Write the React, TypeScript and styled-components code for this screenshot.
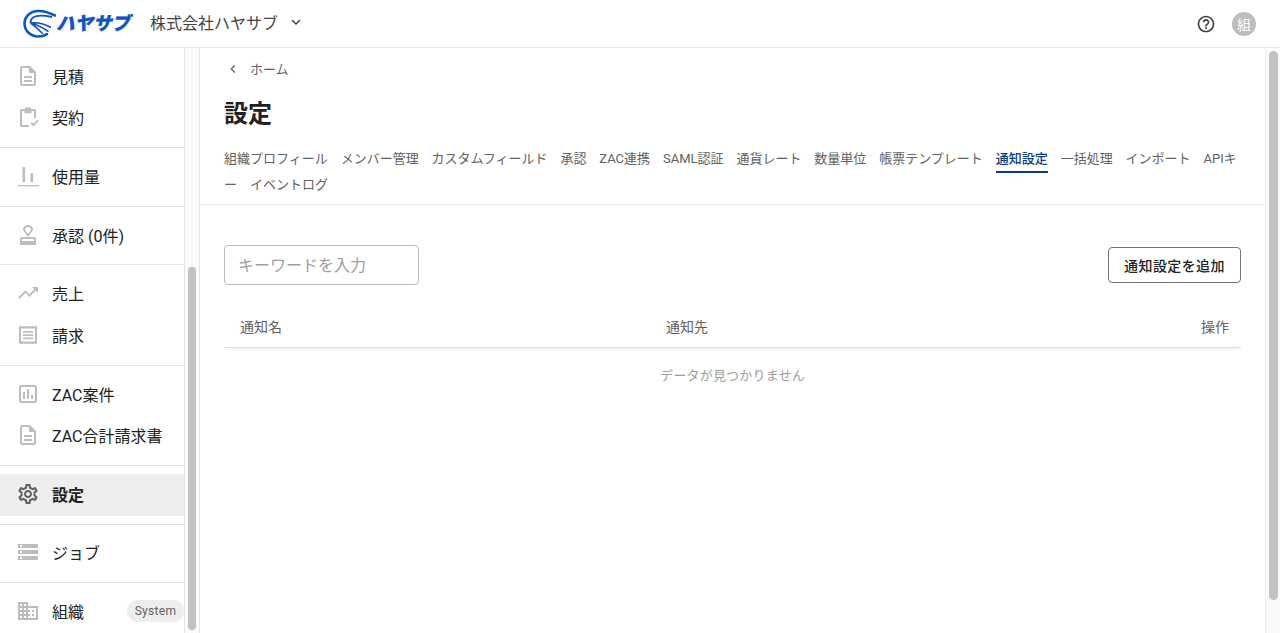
import React from "react";
import styled, { createGlobalStyle } from "styled-components";

const Global = createGlobalStyle`
  html, body { margin: 0; padding: 0; height: 100%; overflow: hidden; background: #fff; }
  body { font-family: Roboto, "Noto Sans CJK JP", sans-serif; color: #212121; }
  #root { height: 100%; }
  * { box-sizing: border-box; }
`;

const Page = styled.div`
  height: 633px;
  display: flex;
  flex-direction: column;
`;
const Header = styled.header`
  height: 48px;
  flex: none;
  display: flex;
  align-items: center;
  padding: 0 24px 0 23px;
  border-bottom: 1px solid #e6e6e6;
`;
const Logo = styled.div`
  display: flex;
  align-items: center;
  width: 127px;
`;
const LogoText = styled.span`
  font-size: 18.5px;
  font-weight: 900;
  font-style: italic;
  color: #0b55c4;
  line-height: 24px;
  -webkit-text-stroke: 0.3px #0b55c4;
  margin-top: 1px;
`;
const Company = styled.div`
  display: flex;
  align-items: center;
  font-size: 16px;
  color: #424242;
  gap: 9px;
  padding-bottom: 3px;
`;
const HeaderEnd = styled.div`
  margin-left: auto;
  display: flex;
  align-items: center;
  gap: 16px;
`;
const Avatar = styled.div`
  width: 24px;
  height: 24px;
  border-radius: 50%;
  background: #bdbdbd;
  color: #fff;
  font-size: 14px;
  display: flex;
  align-items: center;
  justify-content: center;
`;
const Body = styled.div`
  flex: 1;
  min-height: 0;
  display: flex;
`;
const Sidebar = styled.nav`
  width: 185px;
  flex: none;
  border-right: 1px solid #e6e6e6;
  overflow: hidden;
`;
const Group = styled.div`
  padding: 7.9px 0 8px;
  border-bottom: 1px solid #e3e3e3;
  &:not(:first-child) { padding-top: 8px; }
  &:last-child { border-bottom: 0; }
`;
const Item = styled.div<{ $active?: boolean }>`
  height: 41.65px;
  display: flex;
  align-items: center;
  padding: 0 0 2px 16px;
  gap: 12px;
  font-size: 16px;
  font-weight: ${(p) => (p.$active ? 700 : 400)};
  color: #212121;
  background: ${(p) => (p.$active ? "#eeeeee" : "transparent")};
`;
const IconBox = styled.svg<{ $active?: boolean }>`
  width: 24px;
  height: 24px;
  flex: none;
  fill: ${(p) => (p.$active ? "#616161" : "#bdbdbd")};
`;
const Badge = styled.span`
  margin-left: auto;
  height: 22px;
  width: 57px;
  border-radius: 11px;
  background: #eeeeee;
  color: #616161;
  font-size: 12px;
  letter-spacing: 0.3px;
  display: flex;
  align-items: center;
  justify-content: center;
`;
const Track = styled.div<{ $top: number; $bottom: number; $thumb: number }>`
  width: 15px;
  flex: none;
  background: #fafafa;
  border-right: ${(p) => (p.$thumb === 8 ? "1px solid #e6e6e6" : "0")};
  border-left: ${(p) => (p.$thumb === 8 ? "0" : "1px solid #ececec")};
  padding: ${(p) => p.$top}px 0 ${(p) => p.$bottom}px;
  display: flex;
  justify-content: center;
`;
const Thumb = styled.div<{ $width: number }>`
  width: ${(p) => p.$width}px;
  height: 100%;
  border-radius: 5px;
  background: #c1c1c1;
`;
const Main = styled.main`
  flex: 1;
  min-width: 0;
  display: flex;
  flex-direction: column;
`;
const TopBlock = styled.div`
  padding: 10px 24px 6px;
  border-bottom: 1px solid #e6e6e6;
`;
const Crumb = styled.div`
  height: 20px;
  display: flex;
  align-items: center;
  padding-left: 1px;
  font-size: 13px;
  color: #616161;
  gap: 9px;
  & > svg { margin-top: 2px; }
`;
const Title = styled.h1`
  margin: 18px 0 0;
  font-size: 24px;
  line-height: 36px;
  font-weight: 700;
  color: #212121;
`;
const Tabs = styled.div`
  margin-top: 14px;
  font-size: 13px;
  font-weight: 400;
  line-height: 26px;
  color: #616161;
  line-break: anywhere;
`;
const Tab = styled.span<{ $active?: boolean; $joined?: boolean }>`
  margin-right: ${(p) => (p.$joined ? "0" : "12.9px")};
  padding-bottom: 5px;
  font-weight: ${(p) => (p.$active ? 500 : 400)};
  color: ${(p) => (p.$active ? "#0a3d80" : "#616161")};
  border-bottom: ${(p) => (p.$active ? "2px solid #0a3d80" : "0")};
`;
const Content = styled.div`
  padding: 40px 24px 0;
`;
const Toolbar = styled.div`
  display: flex;
  align-items: center;
  justify-content: space-between;
`;
const Search = styled.input`
  width: 195px;
  height: 40px;
  border: 1px solid #bdbdbd;
  border-radius: 4px;
  padding: 0 13px;
  font: 400 16px Roboto, "Noto Sans CJK JP", sans-serif;
  outline: none;
  &::placeholder { color: #9e9e9e; opacity: 1; }
`;
const AddButton = styled.button`
  width: 133px;
  height: 36px;
  background: #fff;
  border: 1px solid #757575;
  border-radius: 4px;
  font: 500 14px Roboto, "Noto Sans CJK JP", sans-serif;
  letter-spacing: 0.4px;
  color: #212121;
  padding: 0;
`;
const TableHead = styled.div`
  margin-top: 19px;
  height: 44px;
  display: grid;
  grid-template-columns: 426px 1fr auto;
  align-items: center;
  padding: 0 12px 0 16px;
  font-size: 14px;
  color: #616161;
  border-bottom: 1px solid #e0e0e0;
  box-shadow: 0 4px 4px -3px rgba(0, 0, 0, 0.08);
`;
const Empty = styled.div`
  margin-top: 18px;
  text-align: center;
  font-size: 13px;
  letter-spacing: 0.2px;
  line-height: 20px;
  color: #9e9e9e;
`;

type P = { active?: boolean; children: React.ReactNode };
const Icon = ({ active, children }: P) => (
  <IconBox viewBox="0 0 24 24" $active={active} aria-hidden>
    {children}
  </IconBox>
);

const doc = "M8 16h8v2H8zm0-4h8v2H8zm6-10H6c-1.1 0-2 .9-2 2v16c0 1.1.89 2 1.99 2H18c1.1 0 2-.9 2-2V8l-6-6zm4 18H6V4h7v5h5v11z";
const icons: Record<string, React.ReactNode> = {
  doc: <path d={doc} />,
  contract: (
    <path d="M9 2.500h6V4h3.500c1 0 1.500.6 1.500 1.500V13h-2V6h-2.500v2.200h-7V6H6v14h7v2H5.500C4.600 22 4 21.400 4 20.500v-15C4 4.600 4.600 4 5.500 4H9zM14.500 18.400l1.300-1.300 1.700 1.700 4-4 1.300 1.300-5.300 5.400z" />
  ),
  usage: <path d="M2 21h21v1.300H2zM6.500 3h2.600v15H6.500zM14.500 9h2.600v9h-2.600z" />,
  stamp: (
    <path d="M4 16v6h16v-6c0-1.100-.9-2-2-2H6c-1.100 0-2 .9-2 2zm14 2H6v-2h12v2zM12 2C9.240 2 7 4.240 7 7l5 7 5-7c0-2.760-2.240-5-5-5zm0 9L9 7c0-1.660 1.340-3 3-3s3 1.340 3 3l-3 4z" />
  ),
  trend: <path d="M16 6l2.290 2.290-4.880 4.880-4-4L2 16.590 3.410 18l6-6 4 4 6.300-6.290L22 12V6z" />,
  receipt: (
    <path d="M3 3.500h1.500V3H6v.5h1.500V3H9v.5h1.500V3H12v.5h1.500V3H15v.5h1.500V3H18v.5h1.500V3H21v18h-1.500v-.5H18v.5h-1.500v-.5H15v.5h-1.500v-.5H12v.5h-1.500v-.5H9v.5H7.500v-.5H6v.5H4.500v-.5H3zM5 5.500v13h14v-13zM7 8h10v1.800H7zm0 3.200h10V13H7zm0 3.200h10v1.800H7z" />
  ),
  report: (
    <path d="M19 3H5c-1.100 0-2 .9-2 2v14c0 1.100.9 2 2 2h14c1.100 0 2-.9 2-2V5c0-1.100-.9-2-2-2zm0 16H5V5h14v14zM7 10h2v7H7zm4-3h2v10h-2zm4 6h2v4h-2z" />
  ),
  gear: (
    <path d="M19.430 12.980c.04-.32.07-.64.07-.98 0-.34-.03-.66-.07-.98l2.110-1.650c.19-.15.24-.42.12-.64l-2-3.460c-.09-.16-.26-.25-.44-.25-.06 0-.12.01-.17.03l-2.490 1c-.52-.4-1.080-.73-1.690-.98l-.38-2.650C14.460 2.180 14.250 2 14 2h-4c-.25 0-.46.18-.49.42l-.38 2.650c-.61.25-1.170.59-1.690.98l-2.490-1c-.06-.02-.12-.03-.18-.03-.17 0-.34.09-.43.25l-2 3.460c-.13.22-.07.49.12.64l2.110 1.650c-.04.32-.07.65-.07.98 0 .33.03.66.07.98l-2.110 1.650c-.19.15-.24.42-.12.64l2 3.460c.09.16.26.25.44.25.06 0 .12-.01.17-.03l2.490-1c.52.4 1.080.73 1.690.98l.38 2.650c.03.24.24.42.49.42h4c.25 0 .46-.18.49-.42l.38-2.650c.61-.25 1.170-.59 1.690-.98l2.490 1c.06.02.12.03.18.03.17 0 .34-.09.43-.25l2-3.460c.12-.22.07-.49-.12-.64l-2.110-1.650zm-1.980-1.710c.04.31.05.52.05.73 0 .21-.02.43-.05.73l-.14 1.130.89.7 1.080.84-.7 1.210-1.270-.51-1.040-.42-.9.68c-.43.32-.84.56-1.250.73l-1.060.43-.16 1.130-.2 1.350h-1.400l-.19-1.350-.16-1.130-1.060-.43c-.43-.18-.83-.41-1.230-.71l-.91-.7-1.060.43-1.270.51-.7-1.210 1.080-.84.89-.7-.14-1.130c-.03-.31-.05-.54-.05-.74s.02-.43.05-.73l.14-1.130-.89-.7-1.080-.84.7-1.210 1.270.51 1.040.42.9-.68c.43-.32.84-.56 1.250-.73l1.060-.43.16-1.130.2-1.350h1.390l.19 1.350.16 1.130 1.060.43c.43.18.83.41 1.230.71l.91.7 1.060-.43 1.270-.51.7 1.210-1.070.85-.89.7.14 1.130zM12 8c-2.210 0-4 1.790-4 4s1.790 4 4 4 4-1.790 4-4-1.790-4-4-4zm0 6c-1.100 0-2-.9-2-2s.9-2 2-2 2 .9 2 2-.9 2-2 2z" />
  ),
  jobs: (
    <path d="M2 20h20v-4H2v4zm2-3h2v2H4v-2zM2 4v4h20V4H2zm4 3H4V5h2v2zm-4 7h20v-4H2v4zm2-3h2v2H4v-2z" />
  ),
  org: (
    <path d="M12 7V3H2v18h20V7H12zM6 19H4v-2h2v2zm0-4H4v-2h2v2zm0-4H4V9h2v2zm0-4H4V5h2v2zm4 12H8v-2h2v2zm0-4H8v-2h2v2zm0-4H8V9h2v2zm0-4H8V5h2v2zm10 12h-8v-2h2v-2h-2v-2h2v-2h-2V9h8v10zm-2-8h-2v2h2v-2zm0 4h-2v2h2v-2z" />
  ),
};

const groups: { icon: string; label: string; active?: boolean; badge?: string }[][] = [
  [{ icon: "doc", label: "見積" }, { icon: "contract", label: "契約" }],
  [{ icon: "usage", label: "使用量" }],
  [{ icon: "stamp", label: "承認 (0件)" }],
  [{ icon: "trend", label: "売上" }, { icon: "receipt", label: "請求" }],
  [{ icon: "report", label: "ZAC案件" }, { icon: "doc", label: "ZAC合計請求書" }],
  [{ icon: "gear", label: "設定", active: true }],
  [{ icon: "jobs", label: "ジョブ" }],
  [{ icon: "org", label: "組織", badge: "System" }],
];

const tabs = [
  "組織プロフィール", "メンバー管理", "カスタムフィールド", "承認", "ZAC連携", "SAML認証", "通貨レート",
  "数量単位", "帳票テンプレート", "通知設定", "一括処理", "インポート",
];

export default function App() {
  return (
    <Page>
      <Global />
      <Header>
        <Logo>
          <svg width="33" height="29" viewBox="0 0 33 29" fill="none" stroke="#0b55c4" aria-hidden>
            <path d="M32 6.500 C26 3.500 20 1.500 14 2 C6 2.800 1.500 8.500 1.500 14.500 C1.500 22 8 27.500 15 27.500 C18.500 27.500 22 26.500 24 25" strokeWidth="2.600" strokeLinecap="round" />
            <path d="M29 8 C22 6.500 14 6 10 8.500 C8 10 7.500 12 7.500 14" strokeWidth="1.800" />
            <path d="M7.500 14 C14 13 22 15 28 18.500 M7.500 14 C13 15 20 19 25.500 22.500 M7.500 14 C11 16 16 21 20 25" strokeWidth="1.500" />
          </svg>
          <LogoText>ハヤサブ</LogoText>
        </Logo>
        <Company>
          株式会社ハヤサブ
          <svg width="18" height="18" viewBox="0 0 24 24" fill="#424242" aria-hidden>
            <path d="M16.590 8.590 12 13.170 7.410 8.590 6 10l6 6 6-6z" />
          </svg>
        </Company>
        <HeaderEnd>
          <svg width="20" height="20" viewBox="0 0 24 24" fill="#424242" aria-hidden>
            <path d="M11 18h2v-2h-2v2zm1-16C6.480 2 2 6.480 2 12s4.480 10 10 10 10-4.480 10-10S17.520 2 12 2zm0 18c-4.410 0-8-3.590-8-8s3.590-8 8-8 8 3.590 8 8-3.590 8-8 8zm0-14c-2.210 0-4 1.790-4 4h2c0-1.100.9-2 2-2s2 .9 2 2c0 2-3 1.750-3 5h2c0-2.250 3-2.500 3-5 0-2.210-1.790-4-4-4z" />
          </svg>
          <Avatar>組</Avatar>
        </HeaderEnd>
      </Header>
      <Body>
        <Sidebar>
          {groups.map((g, i) => (
            <Group key={i}>
              {g.map((it) => (
                <Item key={it.label} $active={it.active}>
                  <Icon active={it.active}>{icons[it.icon]}</Icon>
                  {it.label}
                  {it.badge && <Badge>{it.badge}</Badge>}
                </Item>
              ))}
            </Group>
          ))}
        </Sidebar>
        <Track $top={219} $bottom={3} $thumb={8}>
          <Thumb $width={8} />
        </Track>
        <Main>
          <TopBlock>
            <Crumb>
              <svg width="16" height="16" viewBox="0 0 24 24" fill="#616161" aria-hidden>
                <path d="M15.410 7.410 14 6l-6 6 6 6 1.410-1.410L10.830 12z" />
              </svg>
              ホーム
            </Crumb>
            <Title>設定</Title>
            <Tabs>
              {tabs.map((t) => (
                <Tab key={t} $active={t === "通知設定"}>
                  {t}
                </Tab>
              ))}
              <Tab $joined>APIキ</Tab>
              <Tab>ー</Tab>
              <Tab>イベントログ</Tab>
            </Tabs>
          </TopBlock>
          <Content>
            <Toolbar>
              <Search placeholder="キーワードを入力" />
              <AddButton>通知設定を追加</AddButton>
            </Toolbar>
            <TableHead>
              <span>通知名</span>
              <span>通知先</span>
              <span>操作</span>
            </TableHead>
            <Empty>データが見つかりません</Empty>
          </Content>
        </Main>
        <Track $top={3} $bottom={33} $thumb={9}>
          <Thumb $width={9} />
        </Track>
      </Body>
    </Page>
  );
}
